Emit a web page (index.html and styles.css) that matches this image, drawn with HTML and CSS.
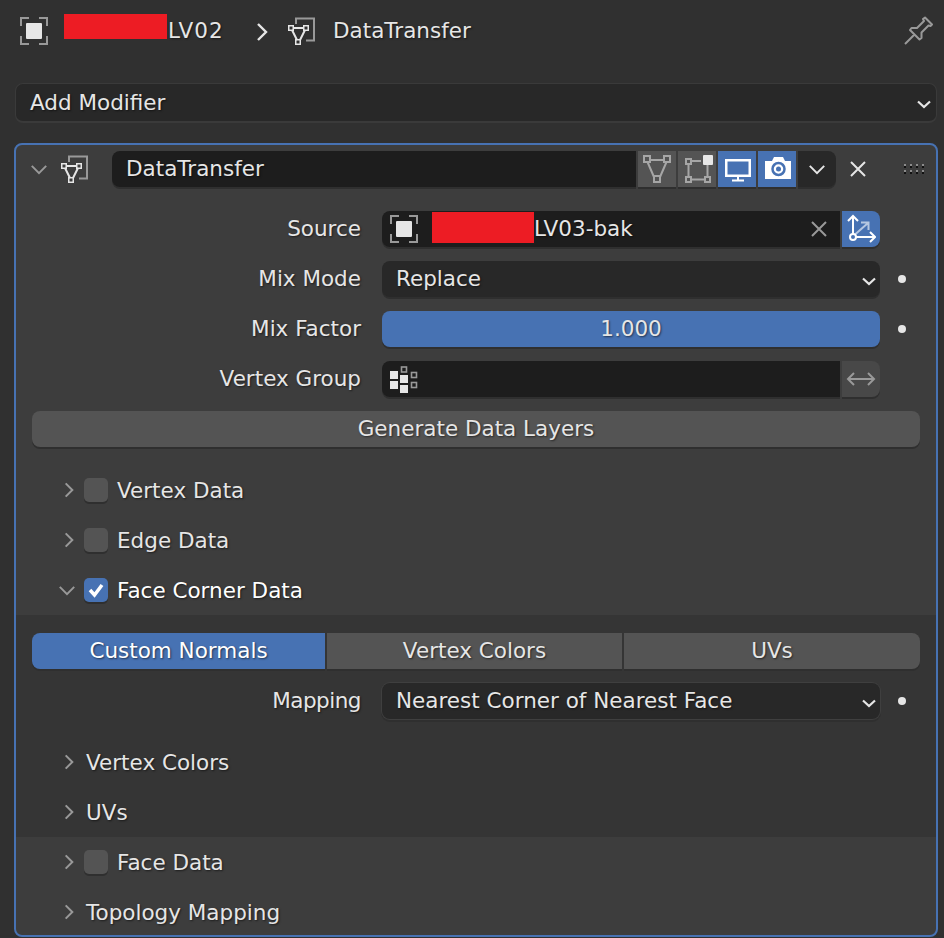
FILE: index.html
```html
<!DOCTYPE html>
<html>
<head>
<meta charset="utf-8">
<title>DataTransfer modifier</title>
<link rel="stylesheet" href="styles.css">
</head>
<body>

<svg class="defs" width="0" height="0">
  <symbol id="i-object" viewBox="0 0 28 28">
    <path d="M1 9V1H9M19 1H27V9M27 19V27H19M9 27H1V19" fill="none" stroke="#999" stroke-width="2"/>
    <rect x="6" y="6" width="16" height="16" rx="1" fill="#e6e6e6"/>
  </symbol>
  <symbol id="i-modifier" viewBox="0 0 28 28">
    <path d="M9 7V1.500H27V23.500H19" fill="none" stroke="#999" stroke-width="2"/>
    <path d="M6 11H17M5 13L10 23M18 13L13 23" fill="none" stroke="#e6e6e6" stroke-width="2"/>
    <rect x="1.750" y="8.750" width="4.500" height="4.500" fill="none" stroke="#e6e6e6" stroke-width="1.500"/>
    <rect x="16.750" y="8.750" width="4.500" height="4.500" fill="none" stroke="#e6e6e6" stroke-width="1.500"/>
    <rect x="8.750" y="22.750" width="4.500" height="4.500" fill="none" stroke="#e6e6e6" stroke-width="1.500"/>
  </symbol>
  <symbol id="i-right" viewBox="0 0 12 20">
    <path d="M2 2L10 10L2 18" fill="none" stroke="currentColor" stroke-width="2.400"/>
  </symbol>
  <symbol id="i-down" viewBox="0 0 20 12">
    <path d="M2 2L10 10L18 2" fill="none" stroke="currentColor" stroke-width="2.200"/>
  </symbol>
  <symbol id="i-caret" viewBox="0 0 14 9">
    <path d="M1 1.500L7 7L13 1.500" fill="none" stroke="currentColor" stroke-width="2.200"/>
  </symbol>
  <symbol id="i-x" viewBox="0 0 18 18">
    <path d="M2 2L16 16M16 2L2 16" fill="none" stroke="currentColor" stroke-width="2"/>
  </symbol>
</svg>

<div class="crumbs">
  <svg class="ico28 crumb-ico"><use href="#i-object"/></svg>
  <span class="redact redact-a"></span>
  <span class="crumb-text">LV02</span>
  <svg class="crumb-sep"><use href="#i-right"/></svg>
  <svg class="ico28 crumb-ico"><use href="#i-modifier"/></svg>
  <span class="crumb-name">DataTransfer</span>
  <svg class="pin" viewBox="0 0 30 30">
    <path d="M2 28L11 19M8.500 12L14 12L21 5L20 3L22 1.500L29 8.500L27.500 10L25.500 9.500L18.500 16.500L18.500 22L16.500 23.500L7 14Z" fill="none" stroke="#999" stroke-width="2" stroke-linejoin="round"/>
  </svg>
</div>

<div class="add-mod">
  <span>Add Modifier</span>
  <svg class="caret"><use href="#i-caret"/></svg>
</div>

<div class="panel">
  <div class="panel-head">
    <svg class="chev-main"><use href="#i-down"/></svg>
    <svg class="ico28 head-ico"><use href="#i-modifier"/></svg>
    <div class="name-field">DataTransfer</div>
    <div class="tool">
      <svg viewBox="0 0 28 28" width="28" height="28">
        <path d="M6 5H22M4.500 7L11 22M23.500 7L17 22" fill="none" stroke="#a6a6a6" stroke-width="2"/>
        <rect x="1" y="1" width="6" height="6" fill="none" stroke="#a6a6a6" stroke-width="2"/>
        <rect x="21" y="1" width="6" height="6" fill="none" stroke="#a6a6a6" stroke-width="2"/>
        <rect x="11" y="21" width="6" height="6" fill="none" stroke="#a6a6a6" stroke-width="2"/>
      </svg>
    </div>
    <div class="tool">
      <svg viewBox="0 0 32 28" width="32" height="28">
        <path d="M10 6H20M7.500 10V22M10 24.500H24M26.500 10V22" fill="none" stroke="#a6a6a6" stroke-width="2"/>
        <rect x="5" y="4" width="5" height="5" fill="none" stroke="#a6a6a6" stroke-width="2"/>
        <rect x="5" y="22" width="5" height="5" fill="none" stroke="#a6a6a6" stroke-width="2"/>
        <rect x="24" y="22" width="5" height="5" fill="none" stroke="#a6a6a6" stroke-width="2"/>
        <rect x="22" y="0" width="10" height="10" rx="1" fill="#e6e6e6"/>
      </svg>
    </div>
    <div class="tool on">
      <svg viewBox="0 0 28 28" width="28" height="28">
        <rect x="3.250" y="5.250" width="23.500" height="15.500" fill="none" stroke="#fff" stroke-width="2.500"/>
        <path d="M15 22V25M9 25.500H21" stroke="#fff" stroke-width="2" fill="none"/>
      </svg>
    </div>
    <div class="tool on">
      <svg viewBox="0 0 28 28" width="28" height="28">
        <path d="M2 6H9L11 2H20L22 6H28V24H2Z" fill="#fff"/>
        <circle cx="15.500" cy="14" r="6" fill="none" stroke="#4772b3" stroke-width="2.500"/>
        <circle cx="15.500" cy="14" r="2.500" fill="#4772b3"/>
      </svg>
    </div>
    <div class="tool tool-end"><svg class="chev-tool"><use href="#i-down"/></svg></div>
    <svg class="close"><use href="#i-x"/></svg>
    <svg class="grip" viewBox="0 0 20 10">
      <path d="M0 0h2v2h-2zM6 0h2v2h-2zM12 0h2v2h-2zM18 0h2v2h-2zM0 6h2v2h-2zM6 6h2v2h-2zM12 6h2v2h-2zM18 6h2v2h-2z" fill="#8c8c8c"/>
      <path d="M0 2h2v2h-2zM6 2h2v2h-2zM12 2h2v2h-2zM18 2h2v2h-2zM0 8h2v2h-2zM6 8h2v2h-2zM12 8h2v2h-2zM18 8h2v2h-2z" fill="#111"/>
    </svg>
  </div>

  <div class="props">
    <div class="row">
      <label>Source</label>
      <div class="field dark">
        <svg class="ico28 field-ico"><use href="#i-object"/></svg>
        <span class="redact redact-b"></span>
        <span>LV03-bak</span>
        <svg class="clear"><use href="#i-x"/></svg>
      </div>
      <div class="side on">
        <svg viewBox="0 0 30 30" width="30" height="30">
          <path d="M9 20.500L22 9M15 8.500H22.500V16" fill="none" stroke="#b5c7e1" stroke-width="2"/>
          <path d="M7 20V2M2 7L7 2L12 7M10 23H29M24 18L29 23L24 28" fill="none" stroke="#fff" stroke-width="2"/>
          <circle cx="7" cy="23" r="3" fill="#4772b3" stroke="#fff" stroke-width="2"/>
        </svg>
      </div>
      <i class="spacer"></i>
    </div>
    <div class="row">
      <label>Mix Mode</label>
      <div class="field menu">
        <span>Replace</span>
        <svg class="caret"><use href="#i-caret"/></svg>
      </div>
      <i class="dot"></i>
    </div>
    <div class="row">
      <label>Mix Factor</label>
      <div class="field slider">1.000</div>
      <i class="dot"></i>
    </div>
    <div class="row">
      <label>Vertex Group</label>
      <div class="field dark">
        <svg class="ico28 field-ico" viewBox="0 0 28 28">
          <rect x="0" y="6" width="8" height="8" fill="#e6e6e6"/>
          <rect x="0" y="16" width="8" height="8" fill="#e6e6e6"/>
          <rect x="10" y="10" width="8" height="8" fill="#e6e6e6"/>
          <rect x="10" y="20" width="8" height="8" fill="#e6e6e6"/>
          <rect x="11.500" y="2" width="5" height="5" fill="none" stroke="#999" stroke-width="1.600"/>
          <rect x="21.500" y="7.500" width="5" height="5" fill="none" stroke="#999" stroke-width="1.600"/>
          <rect x="21.500" y="17.500" width="5" height="5" fill="none" stroke="#999" stroke-width="1.600"/>
        </svg>
      </div>
      <div class="side">
        <svg viewBox="0 0 30 16" width="30" height="16">
          <path d="M2 8H28M8 2L2 8L8 14M22 2L28 8L22 14" fill="none" stroke="#999" stroke-width="2"/>
        </svg>
      </div>
      <i class="spacer"></i>
    </div>
    <div class="btn">Generate Data Layers</div>
  </div>

  <div class="sub-list">
    <div class="sub"><svg class="chev"><use href="#i-right"/></svg><i class="check"></i><span>Vertex Data</span></div>
    <div class="sub"><svg class="chev"><use href="#i-right"/></svg><i class="check"></i><span>Edge Data</span></div>
    <div class="sub"><svg class="chev-open"><use href="#i-down"/></svg><i class="check checked"><svg viewBox="0 0 24 24" width="24" height="24"><path d="M6 12L10.500 17L18 7" fill="none" stroke="#fff" stroke-width="3.500"/></svg></i><span class="bright">Face Corner Data</span></div>
  </div>

  <div class="inner">
    <div class="tabs">
      <div class="tab on">Custom Normals</div>
      <div class="tab">Vertex Colors</div>
      <div class="tab">UVs</div>
    </div>
    <div class="row">
      <label class="tight">Mapping</label>
      <div class="field menu ringed">
        <span>Nearest Corner of Nearest Face</span>
        <svg class="caret"><use href="#i-caret"/></svg>
      </div>
      <i class="dot"></i>
    </div>
    <div class="sub-list inner-subs">
      <div class="sub"><svg class="chev"><use href="#i-right"/></svg><span class="plain">Vertex Colors</span></div>
      <div class="sub"><svg class="chev"><use href="#i-right"/></svg><span class="plain">UVs</span></div>
    </div>
  </div>

  <div class="sub-list">
    <div class="sub"><svg class="chev"><use href="#i-right"/></svg><i class="check"></i><span>Face Data</span></div>
    <div class="sub last"><svg class="chev"><use href="#i-right"/></svg><span class="plain">Topology Mapping</span></div>
  </div>
</div>

</body>
</html>
```

FILE: styles.css
```css
html, body {
	margin: 0;
	height: 938px;
	overflow: hidden;
}
body {
	background: #303030;
	color: #e6e6e6;
	font-family: "DejaVu Sans", sans-serif;
	font-size: 21.5px;
	text-shadow: 1px 1px 2px rgba(0,0,0,.55);
}
.defs { position: absolute; }

.ico28 { width: 28px; height: 28px; flex: none; }
.redact { display: block; background: #ed1c24; flex: none; }

/* breadcrumb bar */
.crumbs {
	display: flex;
	align-items: center;
	height: 60px;
	padding: 0 10px 0 20px;
}
.crumb-ico { margin-top: 2px; }
.redact-a { width: 103px; height: 25px; margin: -7px 0 0 16px; }
.crumb-text { margin-left: 1px; width: 88px; letter-spacing: 1px; }
.crumb-sep { width: 12px; height: 20px; color: #e6e6e6; margin: 4px 19px 0 0; }
.crumb-name { margin-left: 18px; }
.pin { width: 30px; height: 30px; margin: 2px 1px 0 auto; }

.add-mod {
	display: flex;
	align-items: center;
	justify-content: space-between;
	box-sizing: border-box;
	height: 40px;
	margin: 23px 7px 0 15px;
	padding: 0 5px 0 14px;
	background: #282828;
	border: 1px solid #3a3a3a;
	border-bottom-width: 2px;
	border-radius: 8px;
}
.add-mod .caret { margin-top: 4px; }
.caret { width: 14px; height: 9px; margin-top: 6px; color: #e6e6e6; flex: none; }

/* the modifier panel */
.panel {
	box-sizing: border-box;
	height: 794px;
	margin: 20px 6px 0 14px;
	background: #3d3d3d;
	border: 2px solid #4772b3;
	border-radius: 8px;
}
.panel-head {
	display: flex;
	align-items: center;
	height: 36px;
	padding: 6px 0 0 14px;
}
.chev-main { width: 18px; height: 11px; color: #999; flex: none; }
.head-ico { margin-left: 12px; }
.name-field {
	flex: none;
	box-sizing: border-box;
	width: 524px;
	height: 36px;
	line-height: 36px;
	margin-left: 24px;
	padding-left: 14px;
	background: #1d1d1d;
	border-radius: 8px 0 0 8px;
	box-shadow: 0 2px 0 #2f2f2f;
}
.tool {
	display: flex;
	align-items: center;
	justify-content: center;
	flex: none;
	width: 38px;
	height: 36px;
	margin-left: 2px;
	background: #545454;
	box-shadow: 0 2px 0 #2f2f2f;
}
.tool.on { background: #4772b3; }
.tool-end { background: #282828; border-radius: 0 8px 8px 0; }
.chev-tool { width: 18px; height: 11px; color: #e6e6e6; }
.close { width: 18px; height: 18px; margin-left: 13px; color: #e6e6e6; flex: none; }
.grip { width: 20px; height: 10px; margin-left: 37px; flex: none; }

.props { display: flex; flex-direction: column; gap: 14px; padding: 24px 16px 0 16px; }
.row {
	display: flex;
	align-items: center;
	height: 36px;
}
.row label { width: 329px; flex: none; text-align: right; margin: -2px 21px 0 0; }
.row label.tight { letter-spacing: -.5px; }
.field {
	flex: 1;
	display: flex;
	align-items: center;
	box-sizing: border-box;
	height: 36px;
	padding-bottom: 2px;
	background: #282828;
	border-radius: 8px;
	box-shadow: 0 2px 0 #2f2f2f;
}
.field.dark { background: #1d1d1d; border-radius: 8px 0 0 8px; }
.field.menu { padding: 0 4px 2px 14px; justify-content: space-between; }
.field.ringed { box-shadow: 0 0 0 1px #3f3f3f, 0 2px 0 1px #2f2f2f; }
.field.slider { justify-content: center; background: #4772b3; }
.field-ico { margin: 2px 0 0 8px; }
.redact-b { width: 102px; height: 31px; margin: -1px 0 0 14px; }
.clear { width: 18px; height: 18px; color: #999; margin: 2px 12px 0 auto; }
.side {
	display: flex;
	align-items: center;
	justify-content: center;
	flex: none;
	width: 38px;
	height: 36px;
	margin-left: 2px;
	background: #484848;
	border-radius: 0 8px 8px 0;
	box-shadow: 0 2px 0 #2f2f2f;
}
.side.on { background: #4772b3; }
.dot {
	flex: none;
	width: 8px;
	height: 8px;
	margin: 0 14px 0 18px;
	background: #e6e6e6;
	border-radius: 50%;
}
.spacer { flex: none; width: 40px; }
.btn {
	height: 36px;
	line-height: 36px;
	text-align: center;
	background: #545454;
	border-radius: 8px;
	box-shadow: 0 2px 0 #2f2f2f;
}

/* collapsible sub panels */
.props + .sub-list { margin-top: 18px; }
.sub {
	display: flex;
	align-items: center;
	height: 50px;
	padding-left: 41px;
}
.sub.last { margin-bottom: -2px; }
.chev { width: 10px; height: 18px; color: #999; margin: 0 10px 0 7px; flex: none; }
.chev-open { width: 18px; height: 11px; color: #999; margin: 0 8px 0 1px; flex: none; }
.check {
	flex: none;
	width: 24px;
	height: 24px;
	margin-right: 9px;
	background: #545454;
	border-radius: 5px;
	box-shadow: 0 2px 0 #2f2f2f;
}
.check.checked { background: #4772b3; }
.check svg { display: block; }
.bright { color: #fff; }
.plain { margin-left: 2px; }

.inner { background: #353535; padding: 18px 16px 0 16px; height: 204px; }
.tabs { display: grid; grid-template-columns: 293fr 295fr 296fr; gap: 2px; margin-bottom: 14px; }
.tab {
	height: 36px;
	line-height: 36px;
	text-align: center;
	background: #545454;
	box-shadow: 0 2px 0 #2f2f2f;
}
.tab:first-child { border-radius: 8px 0 0 8px; }
.tab:last-child { border-radius: 0 8px 8px 0; }
.tab.on { background: #4772b3; color: #fff; }
.inner-subs { margin: 18px -16px 0 -16px; }
```
